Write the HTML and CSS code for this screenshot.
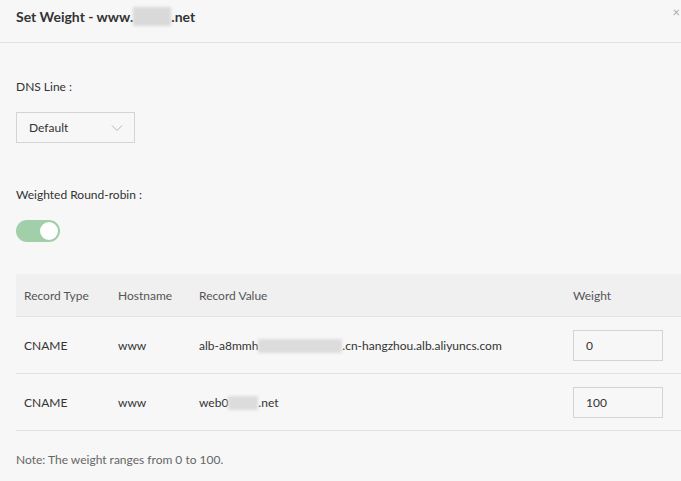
FILE: index.html
```html
<!DOCTYPE html>
<html lang="en">
<head>
    <meta charset="UTF-8">
    <meta name="viewport" content="width=device-width, initial-scale=1.0">
    <title>Set Weight</title>
    <link rel="stylesheet" href="styles.css">
</head>
<body>
    <div class="dialog">
        <div class="dialog-header">
            <h2>Set Weight - www.<span class="blur blur-title"></span>.net</h2>
            <span class="close">&times;</span>
        </div>

        <div class="dialog-body">
            <div class="field">
                <label>DNS Line :</label>
                <div class="select">
                    <span>Default</span>
                    <svg width="12" height="8" viewBox="0 0 12 8"><path d="M1 1.5 L6 6.5 L11 1.5" fill="none" stroke="#b5b5b5" stroke-width="1"/></svg>
                </div>
            </div>

            <div class="field">
                <label>Weighted Round-robin :</label>
                <div class="switch"><span class="knob"></span></div>
            </div>

            <table class="records">
                <thead>
                    <tr>
                        <th class="col-type">Record Type</th>
                        <th class="col-host">Hostname</th>
                        <th class="col-value">Record Value</th>
                        <th class="col-weight">Weight</th>
                    </tr>
                </thead>
                <tbody>
                    <tr>
                        <td>CNAME</td>
                        <td>www</td>
                        <td>alb-a8mmh<span class="blur blur-long"></span>.cn-hangzhou.alb.aliyuncs.com</td>
                        <td><input type="text" value="0"></td>
                    </tr>
                    <tr>
                        <td>CNAME</td>
                        <td>www</td>
                        <td>web0<span class="blur blur-short"></span>.net</td>
                        <td><input type="text" value="100"></td>
                    </tr>
                </tbody>
            </table>

            <p class="note">Note: The weight ranges from 0 to 100.</p>
        </div>
    </div>
</body>
</html>
```

FILE: styles.css
```css
body {
    margin: 0;
    font-family: "Segoe UI", Lato, "Liberation Sans", sans-serif;
    font-size: 12px;
    color: #333;
    background-color: #f7f7f7;
    overflow: hidden;
}
.dialog {
    width: 681px;
    height: 481px;
}
.dialog-header {
    height: 42px;
    border-bottom: 1px solid #e3e3e3;
    display: flex;
    align-items: center;
    padding: 0 16px;
    position: relative;
}
.dialog-header h2 {
    margin: 0 0 10px 0;
    font-size: 14px;
    font-weight: 700;
    color: #333;
    display: flex;
    align-items: center;
}
.close {
    position: absolute;
    right: 1px;
    top: 6px;
    font-size: 13px;
    line-height: 13px;
    color: #aaa;
}
.blur {
    display: inline-block;
    background: #d9d9d9;
    filter: blur(1.5px);
}
.blur-title {
    width: 38px;
    height: 19px;
}
.blur-long {
    width: 84px;
    height: 14px;
    vertical-align: -3px;
    background: #dcdcdc;
}
.blur-short {
    width: 30px;
    height: 14px;
    vertical-align: -3px;
    background: #dcdcdc;
}
.dialog-body {
    padding: 36px 0 0 16px;
}
.field {
    display: flex;
    flex-direction: column;
    align-items: flex-start;
}
.field label {
    height: 17px;
    margin-bottom: 16px;
}
.select {
    height: 29px;
    border: 1px solid #d4d4d4;
    display: flex;
    align-items: center;
    justify-content: space-between;
    padding: 0 11px 0 12px;
    box-sizing: content-box;
    width: 94px;
    margin-bottom: 44px;
}
.switch {
    width: 44px;
    height: 22px;
    border-radius: 11px;
    background-color: #a0cfa9;
    position: relative;
    margin-bottom: 32px;
}
.knob {
    position: absolute;
    top: 2px;
    right: 2px;
    width: 18px;
    height: 18px;
    border-radius: 50%;
    background: #fff;
}
.records {
    width: 665px;
    border-collapse: collapse;
}
.records th {
    text-align: left;
    font-weight: 400;
    color: #555;
    background-color: #f0f0f0;
    height: 42px;
    border-bottom: 1px solid #e3e3e3;
    padding: 0 0 0 8px;
}
.records td {
    height: 56px;
    border-bottom: 1px solid #dfe3e8;
    padding: 0 0 0 8px;
    color: #333;
}
.col-type { width: 86px; }
.col-host { width: 73px; }
.col-value { width: 366px; }
.records input {
    width: 90px;
    height: 31px;
    box-sizing: border-box;
    border: 1px solid #d4d4d4;
    background: #f7f7f7;
    padding: 0 12px;
    font: inherit;
    color: #333;
}
.note {
    margin: 21px 0 0 0;
    color: #666;
}
```
